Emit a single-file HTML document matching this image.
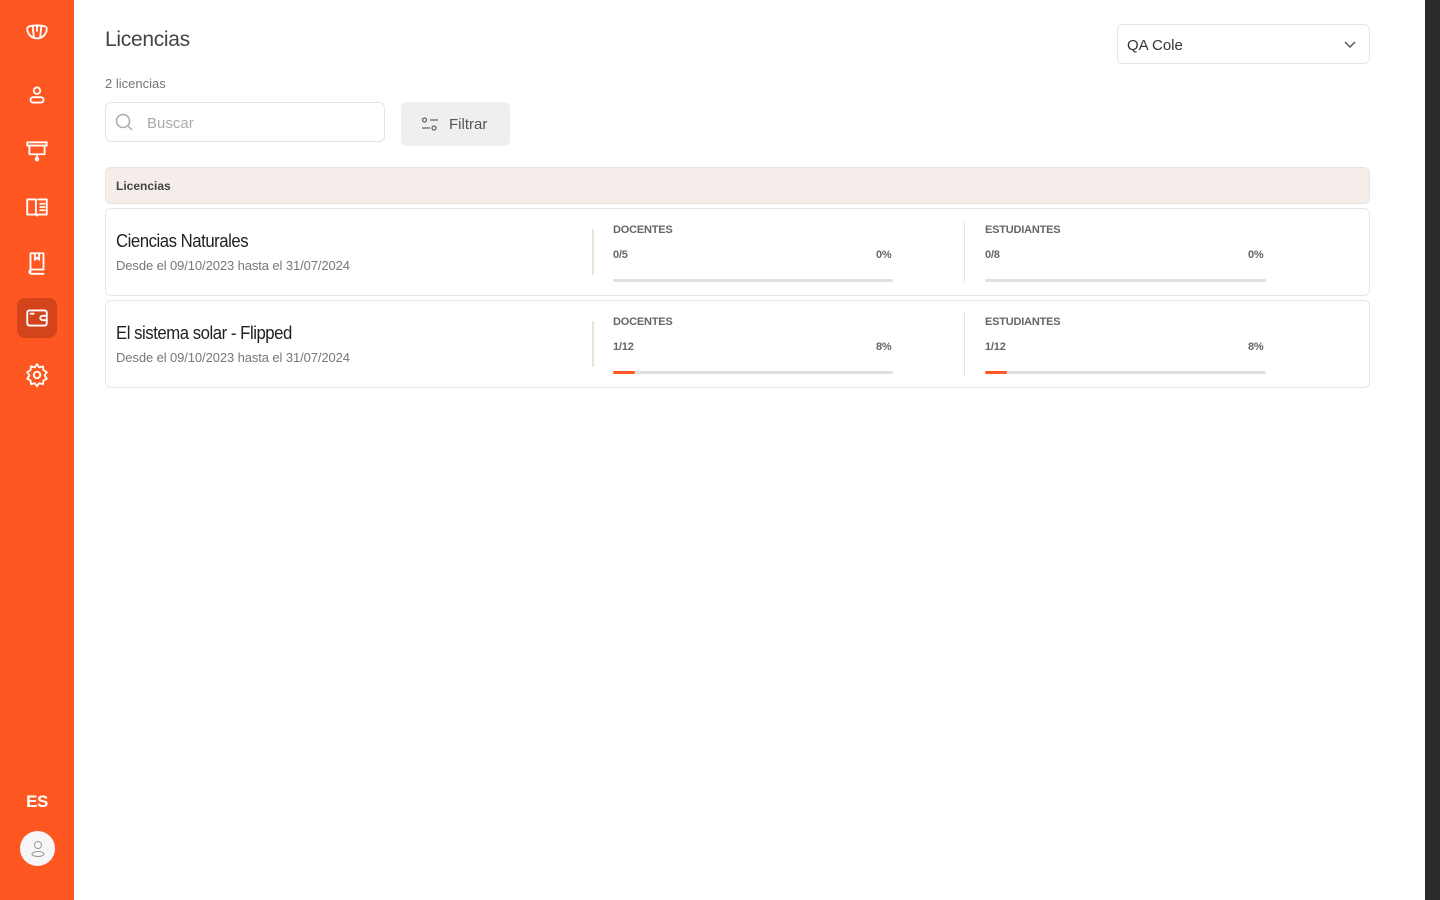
<!DOCTYPE html>
<html><head><meta charset="utf-8"><style>
*{box-sizing:border-box;margin:0;padding:0}
body{width:1440px;height:900px;overflow:hidden;background:#fff;font-family:"Liberation Sans",sans-serif;position:relative;color:#333}
.sb{position:absolute;left:0;top:0;width:74px;height:900px;background:#ff5722}
.ic{position:absolute;left:17px;width:40px;height:40px;display:flex;align-items:center;justify-content:center}
.ic svg{width:26px;height:26px;fill:none;stroke:#fff;stroke-width:1.7;stroke-linecap:round;stroke-linejoin:round}
.rb{position:absolute;left:1425px;top:0;width:15px;height:900px;background:#2b2b2b}
.t{position:absolute}
.card{position:absolute;left:105px;width:1265px;height:88px;border:1px solid #ece6df;border-radius:6px;background:#fff}
.bar{position:absolute;height:3px;background:#e0e0e0;border-radius:2px}
.fill{position:absolute;left:0;top:0;height:3px;background:#ff5722;border-radius:2px}
.lab{position:absolute;font-size:11px;color:#666;font-weight:bold;letter-spacing:-0.2px}
.ttl{position:absolute;left:10px;top:22px;font-size:18px;color:#222;letter-spacing:-0.5px;transform:scaleX(0.93);transform-origin:left;white-space:nowrap}
</style></head><body>
<div class="sb">
 <div class="ic" style="top:13px"><svg viewBox="0 0 24 24"><path d="M3 8c0-2 3-3 9-3s9 1 9 3c0 5-4 9-9 9s-9-4-9-9z"/><path d="M8 6l1 9M16 6l-1 9M12 5v5"/></svg></div>
 <div class="ic" style="top:75px"><svg viewBox="0 0 24 24"><circle cx="12" cy="8" r="3"/><rect x="6" y="14" width="12" height="5" rx="2.5"/></svg></div>
 <div class="ic" style="top:131px"><svg viewBox="0 0 24 24"><rect x="3" y="4" width="18" height="3"/><path d="M5 7v8h14V7M12 15v3"/><circle cx="12" cy="19.5" r="1.2"/></svg></div>
 <div class="ic" style="top:187px"><svg viewBox="0 0 24 24"><path d="M3 5h8v14H3zM13 5h8v14h-8M12 19v1M15 9h4M15 12h4M15 15h4"/></svg></div>
 <div class="ic" style="top:243px"><svg viewBox="0 0 24 24"><path d="M6 3h12v15H7a2 2 0 000 4h11M6 3v17M10 3v6l2-2 2 2V3"/></svg></div>
 <div class="ic" style="top:298px;background:#d4441c;border-radius:8px"><svg viewBox="0 0 24 24"><rect x="3" y="5" width="18" height="14" rx="2"/><path d="M21 10h-4a2 2 0 000 4h4M6 8h3"/></svg></div>
 <div class="ic" style="top:355px"><svg viewBox="0 0 24 24"><circle cx="12" cy="12" r="3"/><path d="M12 2l2 3 3.5-1 .5 3.5 3 2-2 3 2 3-3 1.5-.5 3.5-3.5-1-2 3-2-3-3.5 1-.5-3.5-3-1.5 2-3-2-3 3-2L6.5 4 10 5z"/></svg></div>
 <div class="t" style="left:0;width:74px;top:792px;text-align:center;color:#fff;font-weight:bold;font-size:17px;letter-spacing:-0.5px">ES</div>
 <div style="position:absolute;left:20px;top:831px;width:35px;height:35px;border-radius:50%;background:#f7f7f9;display:flex;align-items:center;justify-content:center"><svg width="18" height="20" viewBox="0 0 18 20" fill="none" stroke="#999" stroke-width="1"><circle cx="9" cy="6" r="3.5"/><ellipse cx="9" cy="15" rx="6" ry="2.5"/></svg></div>
</div>
<div class="rb"></div>
<div class="t" style="left:105px;top:28px;font-size:21px;color:#444;letter-spacing:-0.3px">Licencias</div>
<div class="t" style="left:105px;top:76px;font-size:13px;color:#777">2 licencias</div>
<div style="position:absolute;left:1117px;top:24px;width:253px;height:40px;border:1px solid #e5e5e5;border-radius:6px">
 <span class="t" style="left:9px;top:12px;font-size:15px;color:#333">QA Cole</span>
 <svg style="position:absolute;right:12px;top:14px" width="14" height="10" viewBox="0 0 14 10" fill="none" stroke="#555" stroke-width="1.5"><path d="M2 3l5 5 5-5"/></svg>
</div>
<div style="position:absolute;left:105px;top:102px;width:280px;height:40px;border:1px solid #ece3d8;border-radius:6px">
 <svg style="position:absolute;left:9px;top:10px" width="20" height="20" viewBox="0 0 20 20" fill="none" stroke="#aaa" stroke-width="1.5"><circle cx="8" cy="8" r="6.5"/><path d="M13 13l4 4"/></svg>
 <span class="t" style="left:41px;top:12px;font-size:15px;color:#aaa">Buscar</span>
</div>
<div style="position:absolute;left:401px;top:102px;width:109px;height:44px;background:#efefef;border-radius:6px">
 <svg style="position:absolute;left:20px;top:14px" width="18" height="16" viewBox="0 0 18 16" fill="none" stroke="#666" stroke-width="1.3"><circle cx="3.5" cy="4" r="2"/><path d="M9 4h8M1 12h8"/><circle cx="13" cy="12" r="2"/></svg>
 <span class="t" style="left:48px;top:14px;font-size:15px;color:#555">Filtrar</span>
</div>
<div style="position:absolute;left:105px;top:167px;width:1265px;height:37px;background:#f5ede9;border:1px solid #ebe2dc;border-radius:6px">
 <span class="t" style="left:10px;top:11px;font-size:12px;font-weight:bold;color:#444">Licencias</span>
</div>

<div class="card" style="top:208px">
 <div class="ttl">Ciencias Naturales</div>
 <div class="t" style="left:10px;top:49px;font-size:13px;color:#777;letter-spacing:-0.1px">Desde el 09/10/2023 hasta el 31/07/2024</div>
 <div class="t" style="left:486px;top:20px;width:2px;height:46px;background:#ece3d6"></div>
 <div class="lab" style="left:507px;top:15px">DOCENTES</div>
 <div class="lab" style="left:507px;top:40px">0/5</div>
 <div class="lab" style="left:770px;top:40px">0%</div>
 <div class="bar" style="left:507px;top:70px;width:280px"></div>
 <div class="t" style="left:858px;top:12px;width:1px;height:62px;background:#ece3d6"></div>
 <div class="lab" style="left:879px;top:15px">ESTUDIANTES</div>
 <div class="lab" style="left:879px;top:40px">0/8</div>
 <div class="lab" style="left:1142px;top:40px">0%</div>
 <div class="bar" style="left:879px;top:70px;width:281px"></div>
</div>
<div class="card" style="top:300px">
 <div class="ttl">El sistema solar - Flipped</div>
 <div class="t" style="left:10px;top:49px;font-size:13px;color:#777;letter-spacing:-0.1px">Desde el 09/10/2023 hasta el 31/07/2024</div>
 <div class="t" style="left:486px;top:20px;width:2px;height:46px;background:#ece3d6"></div>
 <div class="lab" style="left:507px;top:15px">DOCENTES</div>
 <div class="lab" style="left:507px;top:40px">1/12</div>
 <div class="lab" style="left:770px;top:40px">8%</div>
 <div class="bar" style="left:507px;top:70px;width:280px"><div class="fill" style="width:22px"></div></div>
 <div class="t" style="left:858px;top:12px;width:1px;height:62px;background:#ece3d6"></div>
 <div class="lab" style="left:879px;top:15px">ESTUDIANTES</div>
 <div class="lab" style="left:879px;top:40px">1/12</div>
 <div class="lab" style="left:1142px;top:40px">8%</div>
 <div class="bar" style="left:879px;top:70px;width:281px"><div class="fill" style="width:22px"></div></div>
</div>
</body></html>
